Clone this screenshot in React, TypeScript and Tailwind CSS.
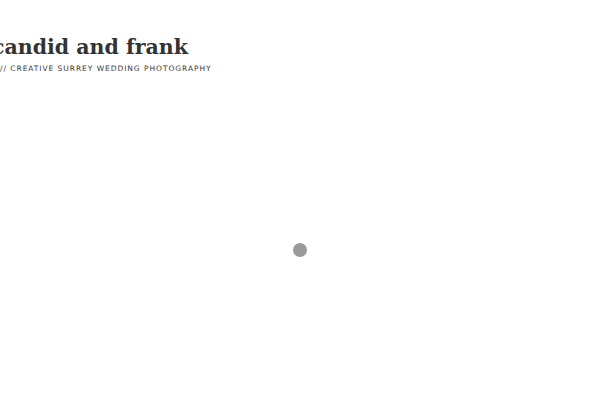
export default function App() {
  return (
    <div className="relative h-[400px] w-[600px] overflow-hidden bg-white">
      <header className="pt-[34px]">
        <h1 className="ml-[-8px] font-['DejaVu_Serif',serif] text-[20.5px] font-bold leading-[26px] text-[#333]">
          candid and frank
        </h1>
        <p className="mt-[4px] font-['DejaVu_Sans',sans-serif] text-[7.5px] uppercase leading-[10px] tracking-[0.95px] text-[#3a3a3a]">
          // Creative Surrey Wedding Photography
        </p>
      </header>
      {/* loading dot */}
      <span className="absolute left-[293px] top-[243px] h-[14px] w-[14px] rounded-full bg-[#999]" />
    </div>
  )
}
